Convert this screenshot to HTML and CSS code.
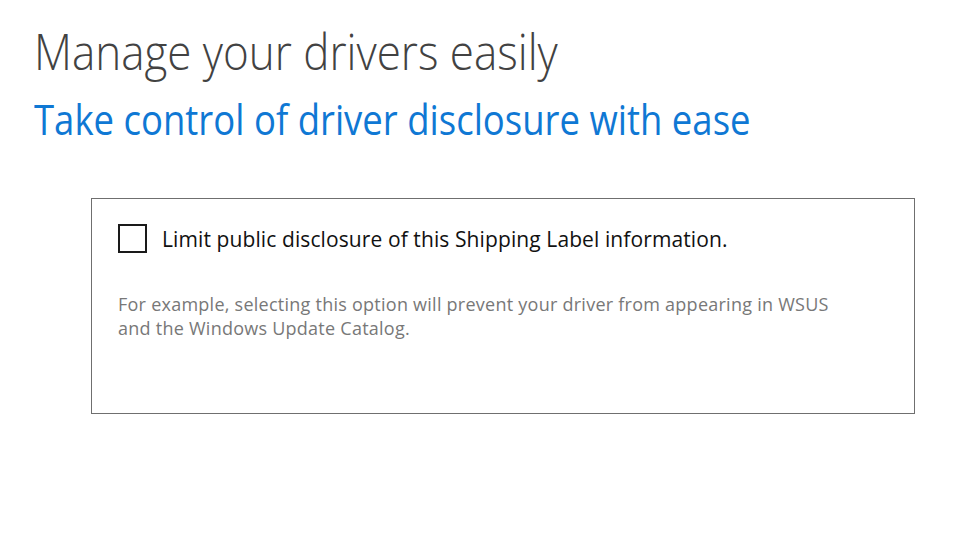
FILE: index.html
```html
<!DOCTYPE html>
<html>
<head>
<meta charset="utf-8">
<link rel="stylesheet" href="styles.css">
</head>
<body>
<main class="slide">
  <h1 class="title">Manage your drivers easily</h1>
  <h2 class="subtitle">Take control of driver disclosure with ease</h2>
  <section class="panel">
    <label class="option">
      <span class="checkbox"></span>
      <span class="option-text">Limit public disclosure of this Shipping Label information.</span>
    </label>
    <p class="note">For example, selecting this option will prevent your driver from appearing in WSUS<br>and the Windows Update Catalog.</p>
  </section>
</main>
</body>
</html>
```

FILE: styles.css
```css
html, body {
  margin: 0;
  padding: 0;
  background: #ffffff;
}

.slide {
  width: 979px;
  height: 551px;
  box-sizing: border-box;
  font-family: "Open Sans", "Noto Sans", sans-serif;
  display: flex;
  flex-direction: column;
}

.title {
  margin: 21px 0 0 34px;
  font-size: 49px;
  line-height: 60px;
  font-weight: 300;
  color: #424242;
  white-space: nowrap;
  transform: scaleX(0.897);
  transform-origin: left center;
}

.subtitle {
  margin: 13px 0 0 34px;
  font-size: 42px;
  line-height: 50px;
  font-weight: 400;
  color: #0f78d4;
  white-space: nowrap;
  transform: scaleX(0.869);
  transform-origin: left center;
}

.panel {
  margin: 54px 0 0 91px;
  width: 824px;
  height: 216px;
  box-sizing: border-box;
  border: 1px solid #6f6f6f;
  padding: 25px 26px 0 26px;
}

.option {
  display: flex;
  align-items: flex-start;
  gap: 15px;
}

.checkbox {
  width: 29px;
  height: 29px;
  box-sizing: border-box;
  border: 2px solid #1a1a1a;
  flex: none;
}

.option-text {
  margin-top: 1px;
  font-size: 21px;
  line-height: 29px;
  color: #111111;
  letter-spacing: 0.1px;
}

.note {
  margin: 38px 0 0 0;
  font-size: 18px;
  line-height: 24px;
  color: #787878;
  letter-spacing: 0.25px;
}
```
